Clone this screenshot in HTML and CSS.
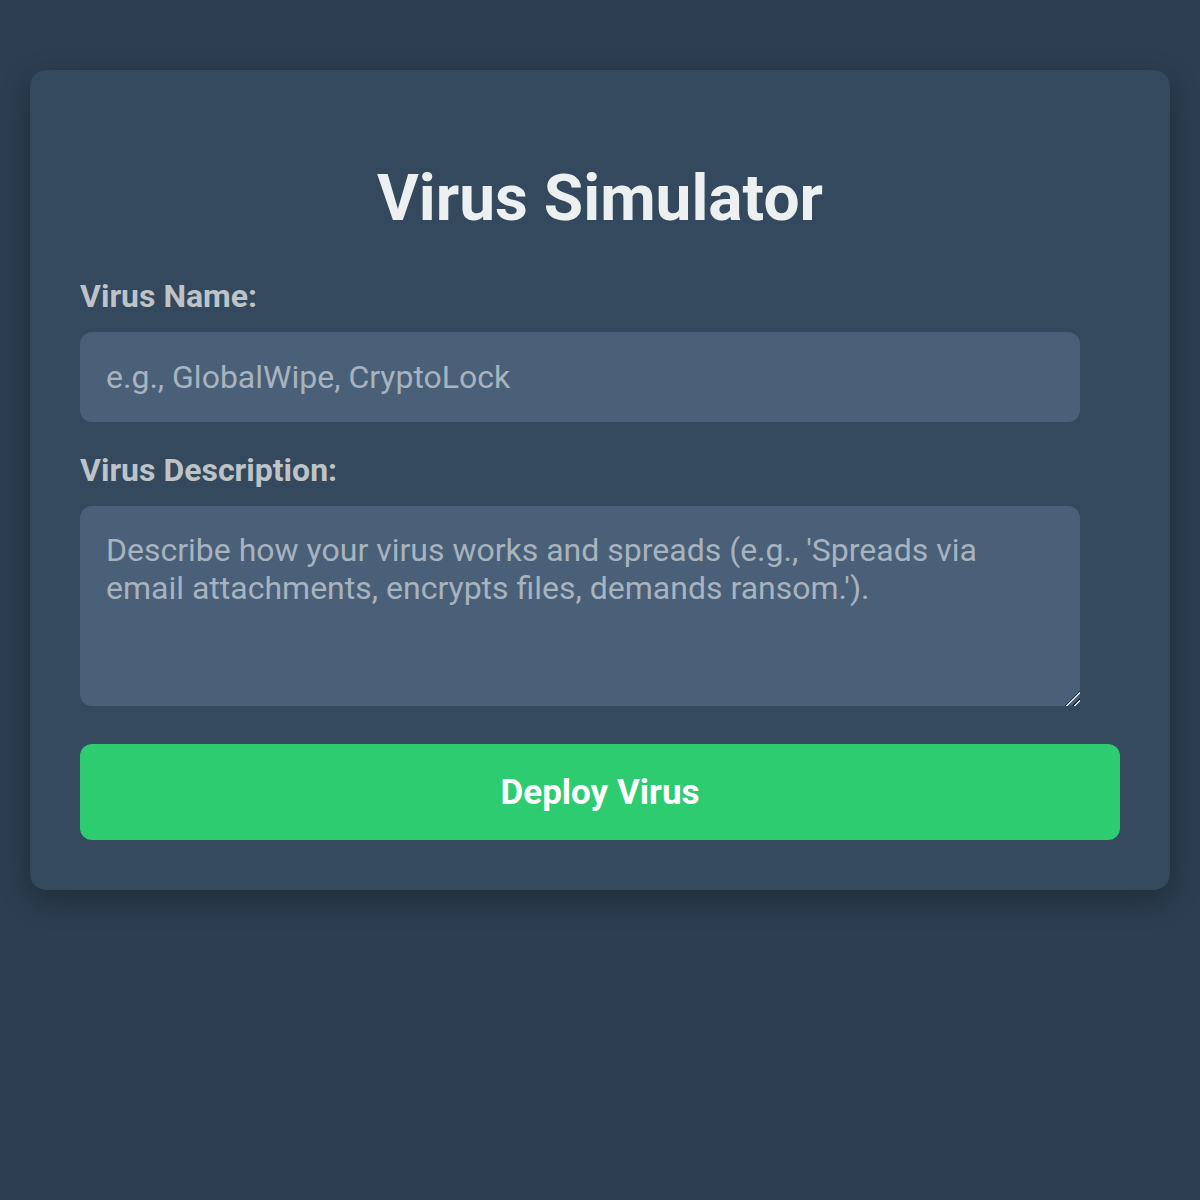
FILE: index.html
```html
<!DOCTYPE html>
<html lang="en">
<head>
<meta charset="utf-8">
<title>Virus Simulator</title>
<link rel="stylesheet" href="styles.css">
</head>
<body>
  <main class="card">
    <h1 class="title">Virus Simulator</h1>
    <form class="form">
      <label class="label" for="vname">Virus Name:</label>
      <input class="field" id="vname" type="text" placeholder="e.g., GlobalWipe, CryptoLock">
      <label class="label" for="vdesc">Virus Description:</label>
      <textarea class="field area" id="vdesc" placeholder="Describe how your virus works and spreads (e.g., 'Spreads via email attachments, encrypts files, demands ransom.')."></textarea>
      <button class="btn" type="button">Deploy Virus</button>
    </form>
  </main>
</body>
</html>
```

FILE: styles.css
```css
html, body {
  margin: 0;
  padding: 0;
}
body {
  background: #2c3e50;
  font-family: Roboto, "Liberation Sans", Arial, sans-serif;
  padding: 70px 30px;
  min-height: 1200px;
  box-sizing: border-box;
}
.card {
  background: #34495e;
  border-radius: 16px;
  padding: 50px;
  box-shadow: 0 10px 30px rgba(0, 0, 0, 0.3);
}
.title {
  margin: 41px 0 42px;
  text-align: center;
  font-size: 64px;
  font-weight: 700;
  color: #ecf0f1;
  line-height: 75px;
}
.form {
  display: flex;
  flex-direction: column;
  align-items: flex-start;
}
.label {
  display: block;
  font-size: 32px;
  font-weight: 700;
  color: #bdc3c7;
  line-height: 37.5px;
  margin-bottom: 16.5px;
}
.field {
  box-sizing: border-box;
  width: 1000px;
  height: 90px;
  padding: 0 26px;
  border: none;
  border-radius: 12px;
  background: #4a6079;
  color: #ecf0f1;
  font-family: Roboto, "Liberation Sans", Arial, sans-serif;
  font-size: 32px;
  margin: 0 0 30px;
  outline: none;
}
.field::placeholder {
  color: #a7b3bf;
}
.area {
  display: block;
  height: 200px;
  padding: 26px 26px;
  line-height: 37.5px;
  resize: vertical;
  margin-bottom: 38px;
}
.area::-webkit-resizer {
  background: linear-gradient(135deg,
    transparent 0 47%,
    #1f2d3a 47% 53%,
    #d7dde3 53% 60%,
    transparent 60% 72%,
    #1f2d3a 72% 78%,
    #d7dde3 78% 85%,
    transparent 85%);
}
.btn {
  width: 100%;
  height: 96px;
  border: none;
  border-radius: 12px;
  background: #2ecc71;
  color: #ffffff;
  font-family: Roboto, "Liberation Sans", Arial, sans-serif;
  font-size: 35px;
  font-weight: 700;
  cursor: pointer;
}
```
